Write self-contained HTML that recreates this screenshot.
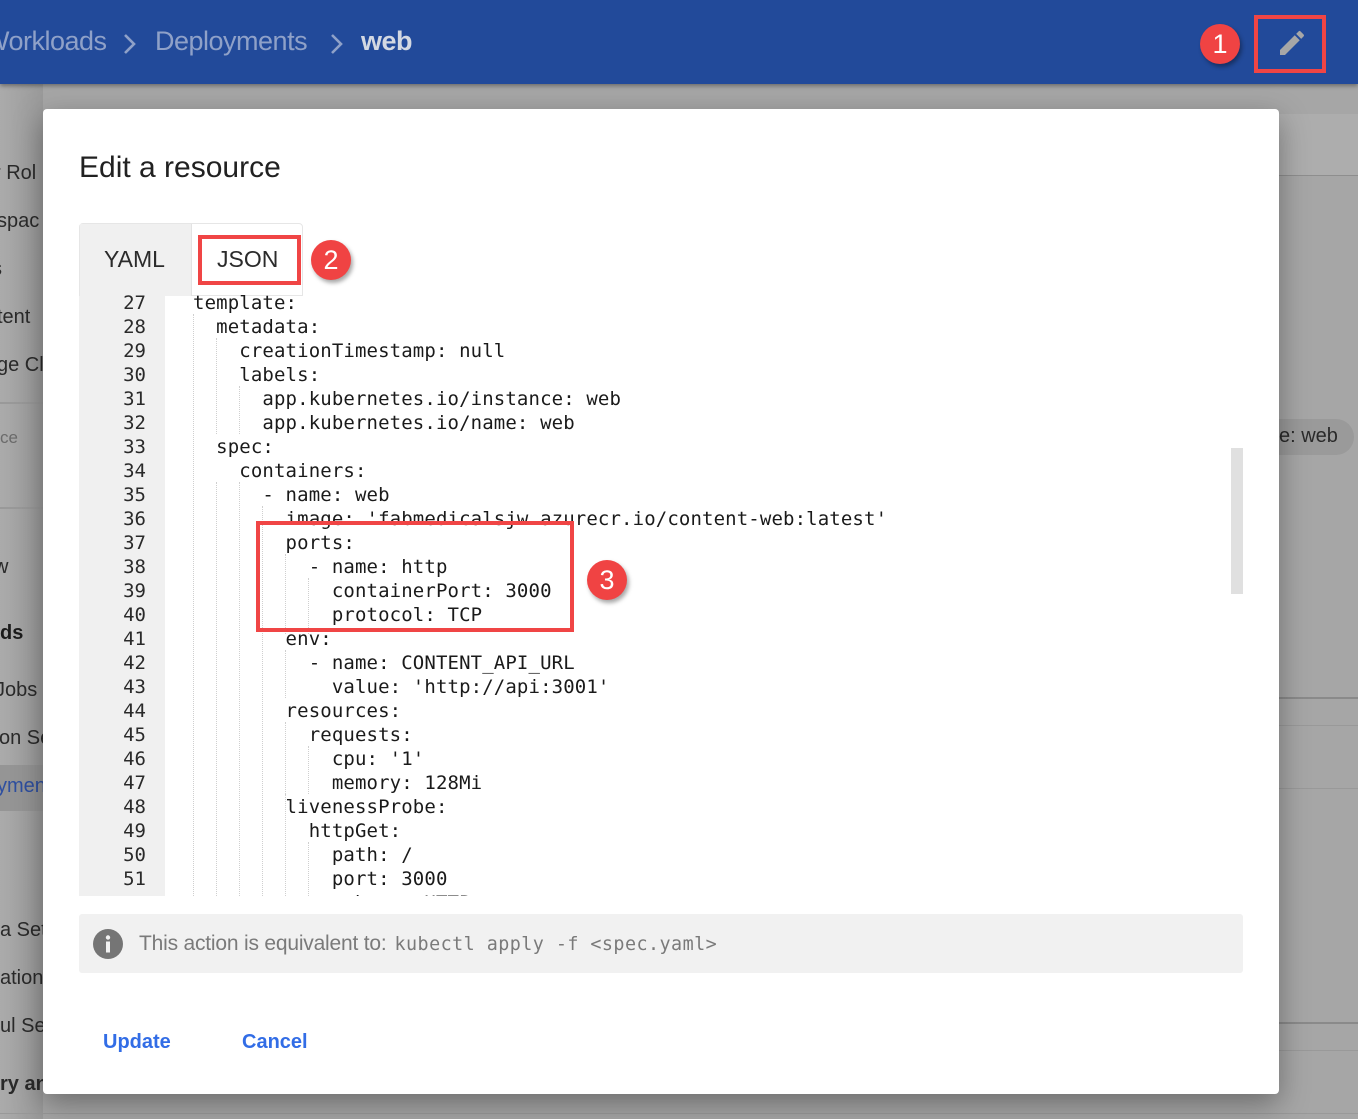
<!DOCTYPE html>
<html><head><meta charset="utf-8">
<style>
*{margin:0;padding:0;box-sizing:border-box}
html,body{width:1358px;height:1119px;overflow:hidden}
body{position:relative;background:#a6a6a6;font-family:"Liberation Sans",Roboto,sans-serif}
.abs{position:absolute}
#hdr{left:0;top:0;width:1358px;height:84px;background:#224a9a;box-shadow:0 2px 4px rgba(0,0,0,.35)}
.crumb{top:26px;font-size:27px;color:#8fa1c8;letter-spacing:-0.5px;white-space:nowrap}
.sb{left:0;font-size:20px;color:#2a2a2a;white-space:nowrap}
#modal{left:43px;top:109px;width:1236px;height:985px;background:#fff;border-radius:4px;box-shadow:0 10px 30px rgba(0,0,0,.35)}
.badge{width:40px;height:40px;border-radius:50%;background:#f04343;color:#fff;font-size:27px;text-align:center;line-height:40px;box-shadow:2px 3px 4px rgba(0,0,0,.35)}
.redbox{border:4px solid #f04545}
pre{font-family:"DejaVu Sans Mono","Liberation Mono",monospace;font-size:19px;line-height:24px;color:#1a1a1a}
.code{letter-spacing:0.13px}
.guide{width:0;border-left:1px dotted #cfcfcf}
</style></head><body>
<div class="abs" style="left:0;top:84px;width:43px;height:1035px;background:linear-gradient(90deg,#ababab,#9a9a9a)"></div>
<div class="abs" style="left:0;top:402px;width:43px;height:2px;background:#999"></div>
<div class="abs" style="left:0;top:507px;width:43px;height:2px;background:#999"></div>
<div class="abs" style="left:0;top:765px;width:43px;height:46px;background:#959595"></div>
<div class="abs sb" style="top:162px;left:-6px">r Rol</div>
<div class="abs sb" style="top:210px;left:-3px">spac</div>
<div class="abs sb" style="top:258px;left:-8px">s</div>
<div class="abs sb" style="top:306px;left:-3px">tent</div>
<div class="abs sb" style="top:354px;left:-3px">ge Cla</div>
<div class="abs sb" style="top:428px;left:0;font-size:17px;color:#6b6b6b">ce</div>
<div class="abs sb" style="top:556px;left:-6px">w</div>
<div class="abs sb" style="top:622px;left:0;font-weight:bold;color:#1c1c1c">ds</div>
<div class="abs sb" style="top:679px;left:-5px">Jobs</div>
<div class="abs sb" style="top:727px;left:-1px">on Se</div>
<div class="abs sb" style="top:775px;left:-3px;color:#2e4fa0">ymen</div>
<div class="abs sb" style="top:919px;left:0">a Set</div>
<div class="abs sb" style="top:967px;left:0">ation</div>
<div class="abs sb" style="top:1015px;left:0">ul Se</div>
<div class="abs sb" style="top:1073px;left:0;font-weight:bold">ry an</div>

<div class="abs" style="left:1279px;top:114px;width:79px;height:62px;background:#adadad"></div>
<div class="abs" style="left:1279px;top:175px;width:79px;height:1px;background:#8e8e8e"></div>
<div class="abs" style="left:1279px;top:697px;width:79px;height:2px;background:#8a8a8a"></div>
<div class="abs" style="left:1279px;top:725px;width:79px;height:1px;background:#999"></div>
<div class="abs" style="left:1279px;top:788px;width:79px;height:1px;background:#999"></div>
<div class="abs" style="left:1279px;top:1022px;width:79px;height:2px;background:#8a8a8a"></div>
<div class="abs" style="left:1279px;top:1050px;width:79px;height:1px;background:#999"></div>
<div class="abs" style="left:0;top:1113px;width:1358px;height:1px;background:#999"></div>
<div class="abs" style="left:1262px;top:419px;width:92px;height:36px;border-radius:18px;background:#9a9a9a"></div>
<div class="abs" style="left:1279px;top:425px;font-size:20px;color:#2a2a2a">e: web</div>

<div id="hdr" class="abs"></div>
<div class="abs crumb" style="left:-16px">Workloads</div>
<svg class="abs" style="left:122px;top:33px" width="16" height="22" viewBox="0 0 16 22"><path d="M3 2l9 9-9 9" fill="none" stroke="#8fa1c8" stroke-width="2.6"/></svg>
<div class="abs crumb" style="left:155px">Deployments</div>
<svg class="abs" style="left:329px;top:33px" width="16" height="22" viewBox="0 0 16 22"><path d="M3 2l9 9-9 9" fill="none" stroke="#8fa1c8" stroke-width="2.6"/></svg>
<div class="abs crumb" style="left:361px;color:#d3d8e2;font-weight:bold">web</div>
<div class="abs badge" style="left:1200px;top:24px">1</div>
<div class="abs redbox" style="left:1254px;top:15px;width:72px;height:58px"></div>
<svg class="abs" style="left:1276px;top:27px" width="32" height="32" viewBox="0 0 24 24"><path d="M3 17.25V21h3.75L17.81 9.94l-3.75-3.75L3 17.25zM20.71 7.04a1 1 0 000-1.41l-2.34-2.34a1 1 0 00-1.41 0l-1.83 1.83 3.75 3.75 1.83-1.830z" fill="#a7a7a7"/></svg>

<div id="modal" class="abs"></div>
<div class="abs" style="left:79px;top:151px;font-size:30px;color:#212121">Edit a resource</div>

<div class="abs" style="left:79px;top:223px;width:224px;height:73px;border:1px solid #e6e6e6;border-radius:4px 4px 0 0;background:#fff"></div>
<div class="abs" style="left:80px;top:224px;width:112px;height:72px;background:#f0f0f0;border-right:1px solid #e3e3e3"></div>
<div class="abs" style="left:104px;top:246px;font-size:23px;color:#2b2b2b">YAML</div>
<div class="abs" style="left:217px;top:246px;font-size:23px;color:#2b2b2b">JSON</div>
<div class="abs redbox" style="left:198px;top:235px;width:103px;height:50px"></div>
<div class="abs badge" style="left:311px;top:240px">2</div>

<div class="abs" style="left:79px;top:296px;width:86px;height:600px;background:#f0f0f0"></div>
<pre class="abs" style="left:79px;top:291px;width:67px;text-align:right;color:#2a2a2a">27
28
29
30
31
32
33
34
35
36
37
38
39
40
41
42
43
44
45
46
47
48
49
50
51</pre>
<div class="abs guide" style="left:193px;top:314px;height:582px"></div>
<div class="abs guide" style="left:216px;top:338px;height:96px"></div>
<div class="abs guide" style="left:216px;top:482px;height:414px"></div>
<div class="abs guide" style="left:239px;top:386px;height:48px"></div>
<div class="abs guide" style="left:239px;top:482px;height:414px"></div>
<div class="abs guide" style="left:262px;top:506px;height:390px"></div>
<div class="abs guide" style="left:285px;top:554px;height:80px"></div>
<div class="abs guide" style="left:285px;top:650px;height:48px"></div>
<div class="abs guide" style="left:285px;top:722px;height:72px"></div>
<div class="abs guide" style="left:285px;top:794px;height:102px"></div>
<div class="abs guide" style="left:308px;top:578px;height:56px"></div>
<div class="abs guide" style="left:308px;top:746px;height:48px"></div>
<div class="abs guide" style="left:308px;top:842px;height:54px"></div>
<div class="abs" style="left:165px;top:290px;width:1070px;height:606px;overflow:hidden">
<pre class="abs code" style="left:28px;top:1px">template:
  metadata:
    creationTimestamp: null
    labels:
      app.kubernetes.io/instance: web
      app.kubernetes.io/name: web
  spec:
    containers:
      - name: web
        image: 'fabmedicalsjw.azurecr.io/content-web:latest'
        ports:
          - name: http
            containerPort: 3000
            protocol: TCP
        env:
          - name: CONTENT_API_URL
            value: 'http://api:3001'
        resources:
          requests:
            cpu: '1'
            memory: 128Mi
        livenessProbe:
          httpGet:
            path: /
            port: 3000
            scheme: HTTP</pre>
</div>
<div class="abs" style="left:1231px;top:448px;width:12px;height:146px;background:#e0e0e0"></div>
<div class="abs redbox" style="left:256px;top:521px;width:318px;height:111px"></div>
<div class="abs badge" style="left:587px;top:560px">3</div>

<div class="abs" style="left:79px;top:914px;width:1164px;height:59px;background:#f1f1f1;border-radius:3px"></div>
<svg class="abs" style="left:93px;top:929px" width="30" height="30" viewBox="0 0 30 30"><circle cx="15" cy="15" r="15" fill="#757575"/><circle cx="15" cy="8.5" r="2.2" fill="#f1f1f1"/><rect x="13" y="12.5" width="4" height="11" fill="#f1f1f1"/></svg>
<div class="abs" style="left:139px;top:932px;font-size:21px;color:#7a7a7a;white-space:nowrap;letter-spacing:-0.2px">This action is equivalent to:<span style="font-family:'DejaVu Sans Mono','Liberation Mono',monospace;font-size:18.4px;margin-left:8px;letter-spacing:0.45px">kubectl apply -f &lt;spec.yaml&gt;</span></div>

<div class="abs" style="left:103px;top:1031px;font-size:20px;color:#326de6;font-weight:bold">Update</div>
<div class="abs" style="left:242px;top:1031px;font-size:20px;color:#326de6;font-weight:bold">Cancel</div>
</body></html>
